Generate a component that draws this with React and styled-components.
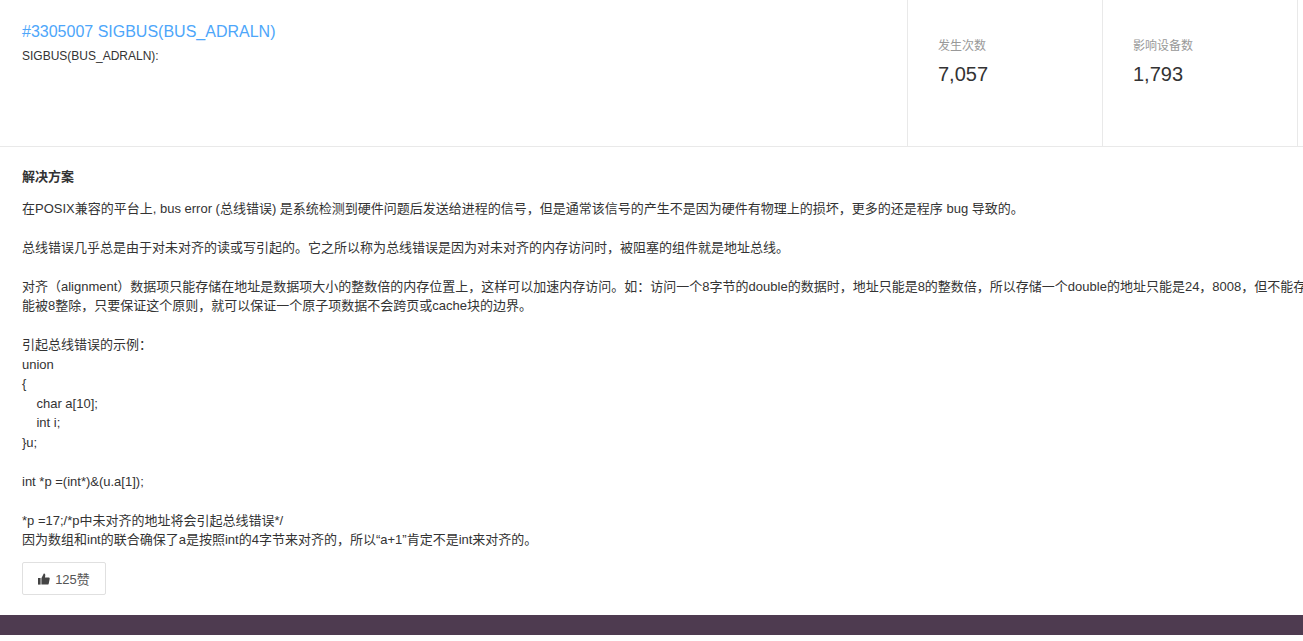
import React from "react";
import styled, { createGlobalStyle } from "styled-components";

const Global = createGlobalStyle`
  html, body { margin: 0; padding: 0; background: #fff; overflow: hidden; }
  body { font-family: "Liberation Sans", "Noto Sans CJK SC", sans-serif; color: #333; }
`;
const Page = styled.div`width: 1303px; height: 635px; display: flex; flex-direction: column; overflow: hidden;`;
const Header = styled.header`display: flex; height: 146px; border-bottom: 1px solid #e9e9e9; flex: none;`;
const Intro = styled.div`flex: 1; padding: 22px 22px 0;`;
const Title = styled.h1`margin: 0; font-size: 16px; line-height: 20px; font-weight: 400; color: #4da6fa;`;
const Sub = styled.p`margin: 6px 0 0; font-size: 12px; line-height: 16px; color: #333;`;
const Stat = styled.div`width: 195px; box-sizing: border-box; flex: none; border-left: 1px solid #e9e9e9; padding: 38px 0 0 30px;`;
const StatLabel = styled.div`font-size: 12px; line-height: 16px; color: #999;`;
const StatValue = styled.div`margin-top: 7px; font-size: 20px; line-height: 26px; color: #333;`;
const End = styled.div`width: 5px; flex: none; border-left: 1px solid #e9e9e9;`;
const Body = styled.main`flex: 1; padding: 20px 22px 0; min-width: 0; overflow: hidden;`;
const Heading = styled.h2`margin: 0; font-size: 13px; line-height: 20px; font-weight: 700; color: #333;`;
const Content = styled.div`margin-top: 11.5px; font-size: 13px; line-height: 19.5px; white-space: pre; color: #333;`;
const Like = styled.button`
  display: inline-flex; align-items: center; justify-content: center; gap: 5px;
  width: 84px; height: 33px; margin-top: 12.5px; padding: 0; box-sizing: border-box;
  background: #fff; border: 1px solid #e0e0e0; border-radius: 2px;
  font: 13px "Liberation Sans", "Noto Sans CJK SC", sans-serif; color: #555;
`;
const Footer = styled.footer`height: 20px; flex: none; background: #4e3b50;`;

const Thumb = () => (
  <svg width="12" height="12" viewBox="0 0 12 12" fill="#444" aria-hidden="true">
    <rect x="0" y="5" width="2.6" height="6.6" />
    <path d="M3.4 5.2 5.8.4c.9 0 1.5.6 1.5 1.5L7 4.4h3.6c.8 0 1.3.6 1.1 1.4l-1 4.9c-.1.6-.6.9-1.1.9H3.4z" />
  </svg>
);

const text = `在POSIX兼容的平台上, bus error (总线错误) 是系统检测到硬件问题后发送给进程的信号，但是通常该信号的产生不是因为硬件有物理上的损坏，更多的还是程序 bug 导致的。

总线错误几乎总是由于对未对齐的读或写引起的。它之所以称为总线错误是因为对未对齐的内存访问时，被阻塞的组件就是地址总线。

对齐（alignment）数据项只能存储在地址是数据项大小的整数倍的内存位置上，这样可以加速内存访问。如：访问一个8字节的double的数据时，地址只能是8的整数倍，所以存储一个double的地址只能是24，8008，但不能存储在地址1006，因为它不
能被8整除，只要保证这个原则，就可以保证一个原子项数据不会跨页或cache块的边界。

引起总线错误的示例：
union
{
    char a[10];
    int i;
}u;

int *p =(int*)&(u.a[1]);

*p =17;/*p中未对齐的地址将会引起总线错误*/
因为数组和int的联合确保了a是按照int的4字节来对齐的，所以“a+1”肯定不是int来对齐的。`;

export default function App() {
  return (
    <Page>
      <Global />
      <Header>
        <Intro>
          <Title>#3305007 SIGBUS(BUS_ADRALN)</Title>
          <Sub>SIGBUS(BUS_ADRALN):</Sub>
        </Intro>
        <Stat><StatLabel>发生次数</StatLabel><StatValue>7,057</StatValue></Stat>
        <Stat><StatLabel>影响设备数</StatLabel><StatValue>1,793</StatValue></Stat>
        <End />
      </Header>
      <Body>
        <Heading>解决方案</Heading>
        <Content>{text}</Content>
        <Like><Thumb />125赞</Like>
      </Body>
      <Footer />
    </Page>
  );
}
